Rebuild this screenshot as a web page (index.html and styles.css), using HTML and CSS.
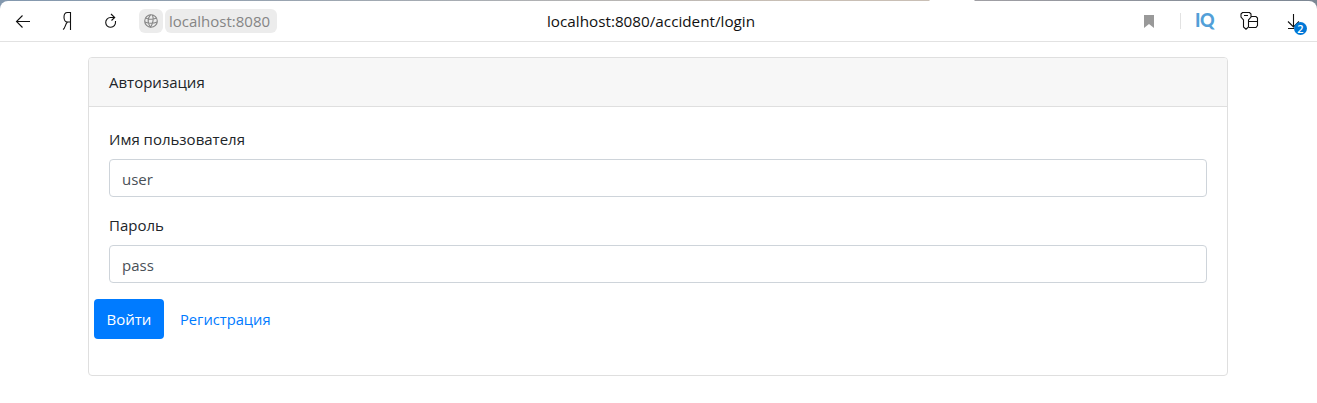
FILE: index.html
```html
<!DOCTYPE html>
<html lang="ru">
<head>
<meta charset="utf-8">
<title>Авторизация</title>
<link rel="stylesheet" href="styles.css">
</head>
<body>
<div class="window">
  <header class="toolbar">
    <div class="nav">
      <svg class="back" width="16" height="14" viewBox="0 0 16 14"><path d="M15 7.500H1.500M7.500 1.500l-6 6 6 6"/></svg>
      <svg class="home" width="10" height="20" viewBox="0 0 10 20"><path d="M8.500 19V1.500H5.500C3 1.500 2 3.200 2 6.200s1.200 4.800 3.500 4.800h3M5.500 11C3 13 3.500 17.500 1 18.500"/></svg>
      <svg class="reload" width="14" height="16" viewBox="0 0 14 16"><path d="M10.500 4.500H6.500A4.900 4.900 0 1 0 11.500 9V8M7 1l3.700 3.500L7.500 7.500"/></svg>
      <span class="site"><svg width="14" height="14" viewBox="0 0 14 14"><circle cx="7" cy="7" r="6.300"/><path d="M.8 8Q7 10.500 13.200 8M1.500 4Q7 6.500 12.500 4M6.500.7Q1.800 7 6.500 13.300M8.500.8Q10.500 7 6.500 13.300"/></svg></span>
      <span class="host">localhost:8080</span>
    </div>
    <div class="address">localhost:8080/accident/login</div>
    <div class="tools">
      <svg class="bookmark" width="10" height="13" viewBox="0 0 10 13"><path d="M0 0h10v13L5 9l-5 4z"/></svg>
      <span class="divider"></span>
      <span class="iq">IQ</span>
      <svg class="key" width="19" height="18" viewBox="0 0 19 18"><path d="M2.500.500h7l1.500 1.500v3L8.500 8v7L6 17.200 3.500 15V8L1 5V2zM4 3.500h4M8.500 9.500h9M11 4.500h5L17.500 6v7.500L16 15.500H9"/></svg>
      <span class="download">
        <svg width="14" height="16" viewBox="0 0 14 16"><path d="M6.500 0v12.500M1 7.500l5.500 5.500L12 7.500M1 14.500h6"/></svg>
        <span class="count">2</span>
      </span>
    </div>
  </header>
</div>
<main class="card">
  <h1 class="card-header">Авторизация</h1>
  <form class="card-body">
    <label for="name">Имя пользователя</label>
    <input id="name" type="text" value="user">
    <label for="password">Пароль</label>
    <input id="password" type="text" value="pass">
    <div class="actions">
      <button type="button">Войти</button>
      <a>Регистрация</a>
    </div>
  </form>
</main>
</body>
</html>
```

FILE: styles.css
```css
* { box-sizing: border-box; }
body { margin: 0; background: #fff; color: #212529; font: 15px/24px "Open Sans", "Noto Sans", sans-serif; }
svg { display: block; fill: none; stroke: #111; stroke-width: 1.1; }
.window { padding-top: 1px; background: linear-gradient(90deg, #8398ae, #a8adb3 35%, #c9bfb5 60%, #c9bfb5 929px, #fff 930px, #fff 974px, #a09fa4 975px, #7c8794); }
.toolbar { height: 41px; display: grid; grid-template-columns: 547px 1fr auto; align-items: center; background: #fff; border-bottom: 1px solid #e2e2e2; border-radius: 8px 8px 0 0; }
.nav { display: flex; align-items: center; padding-left: 15px; }
.home { margin-left: 31px; }
.reload { margin-left: 32px; }
.site { display: flex; align-items: center; justify-content: center; width: 24px; height: 24px; margin-left: 21px; background: #ececec; border-radius: 6px; }
.site svg { stroke: #858585; }
.host { width: 112px; height: 24px; margin-left: 2px; padding-left: 4px; background: #ececec; border-radius: 6px; color: #858585; }
.address { color: #111; font-size: 15.25px; }
.tools { display: flex; align-items: center; padding-right: 8px; }
.bookmark { fill: #999; stroke: none; }
.divider { width: 1px; height: 16px; margin-left: 26px; background: #e2e2e2; }
.iq { width: 20px; margin: -3px 0 0 14px; color: #529fd8; font: 900 18px/20px Lato, sans-serif; letter-spacing: -.5px; }
.key { margin-left: 25px; }
.download { position: relative; width: 22px; height: 24px; padding-top: 5px; margin-left: 28px; }
.count { position: absolute; left: 7px; top: 13px; width: 13px; height: 13px; border-radius: 50%; background: #0078d7; color: #fff; font: 600 11px/13px "Open Sans", sans-serif; text-align: center; }
.card { width: 1140px; height: 319px; margin: 15px 0 0 88px; border: 1px solid #dfdfdf; border-radius: 4px; }
.card-header { margin: 0; padding: 12px 20px; background: #f7f7f7; border-bottom: 1px solid #dfdfdf; border-radius: 3px 3px 0 0; font-size: inherit; font-weight: 400; }
.card-body { padding: 20px; }
label { display: block; margin-bottom: 8px; }
input { display: block; width: 100%; height: 38px; margin-bottom: 16px; padding: 7px 12px 5px; border: 1px solid #ced4da; border-radius: 4px; background: #fff; color: #495057; font: inherit; }
.actions { display: flex; align-items: center; gap: 16px; margin-left: -15px; }
button { width: 70px; height: 40px; padding: 0; border: 0; border-radius: 4px; background: #007bff; color: #fff; font: inherit; }
a { color: #007bff; font-size: 14.7px; }
```
